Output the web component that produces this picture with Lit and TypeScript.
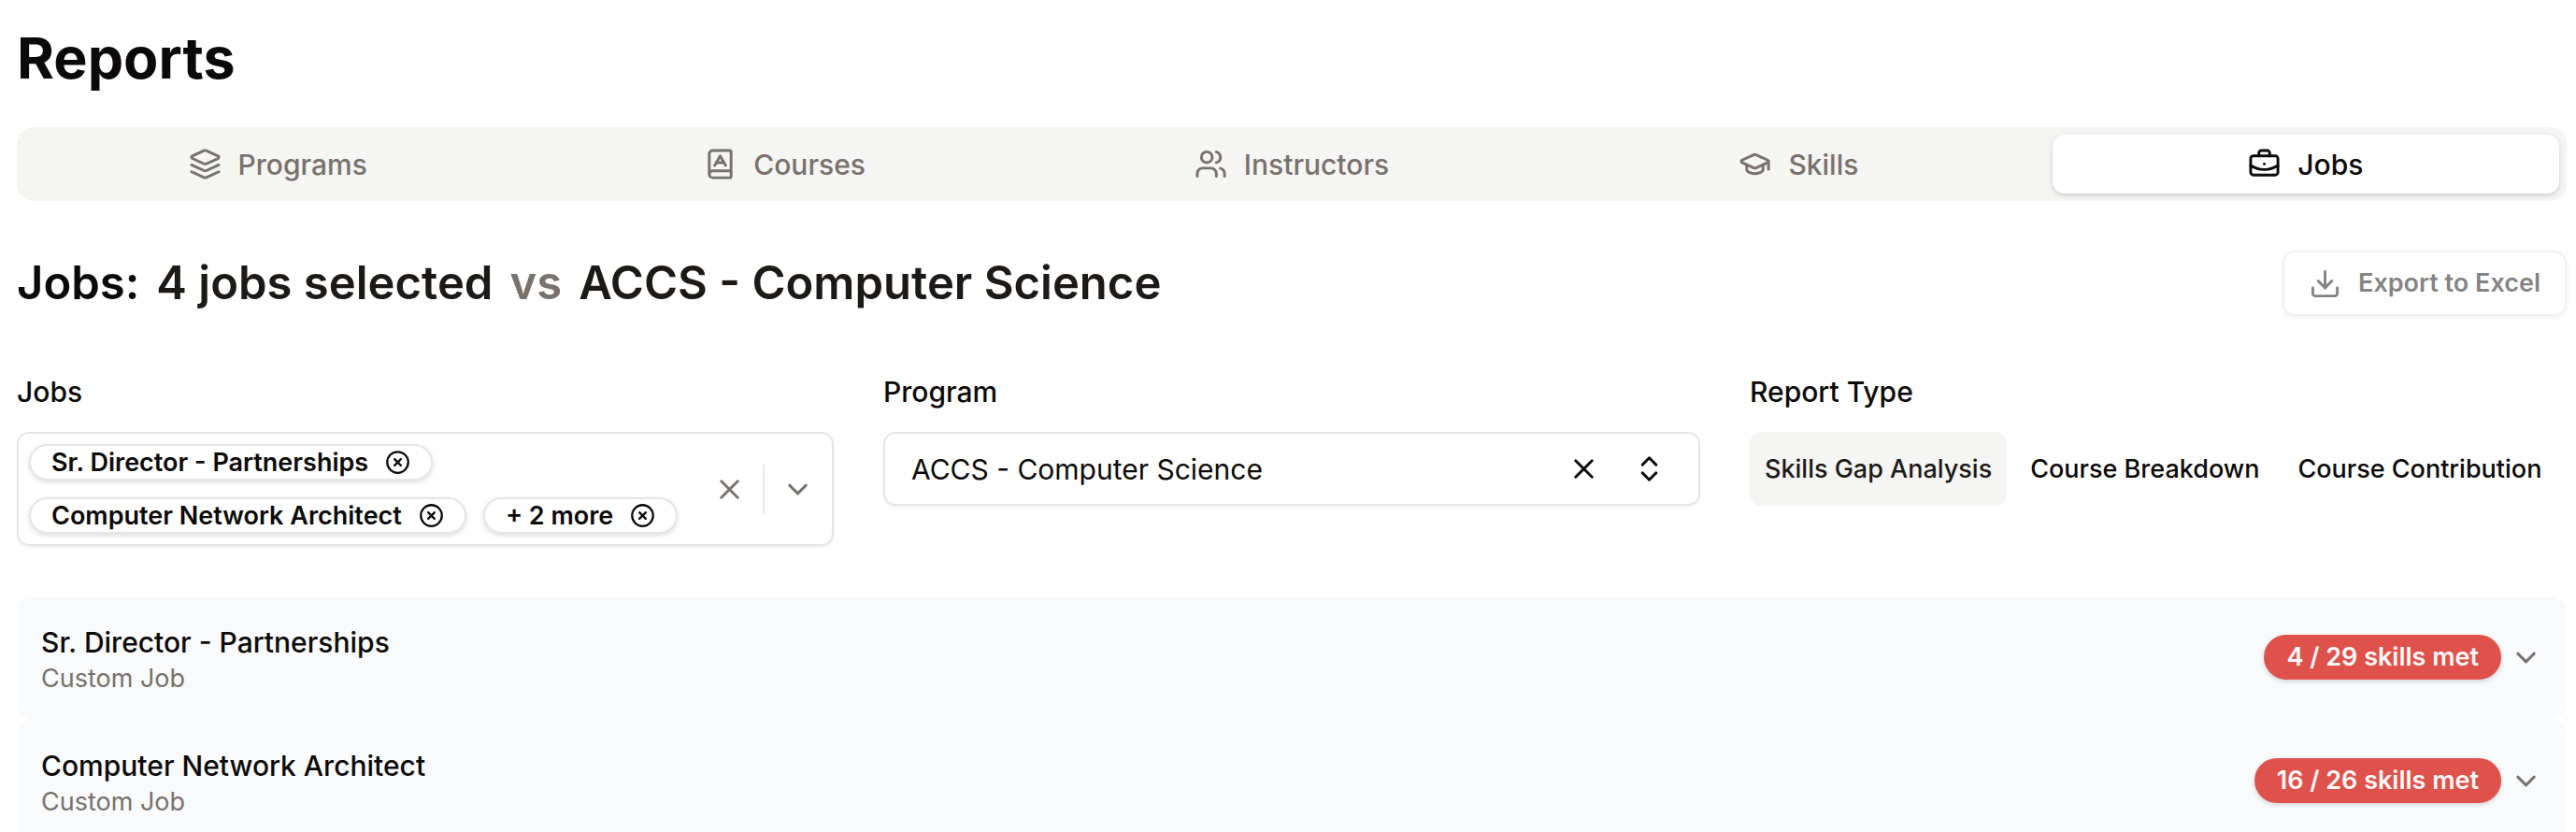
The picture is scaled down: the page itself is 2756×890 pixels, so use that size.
import { LitElement, html, css, svg } from "lit";
import { customElement, state } from "lit/decorators.js";

const icon = (body: unknown) => html`<svg class="icon" viewBox="0 0 24 24" fill="none" stroke="currentColor" stroke-width="2" stroke-linecap="round" stroke-linejoin="round" aria-hidden="true">${body}</svg>`;

const icons = {
  layers: svg`<path d="m12.83 2.18a2 2 0 0 0-1.66 0L2.6 6.08a1 1 0 0 0 0 1.83l8.58 3.91a2 2 0 0 0 1.66 0l8.58-3.9a1 1 0 0 0 0-1.83Z"/><path d="m22 12.65-9.17 4.16a2 2 0 0 1-1.66 0L2 12.65"/><path d="m22 17.65-9.17 4.16a2 2 0 0 1-1.66 0L2 17.65"/>`,
  book: svg`<path d="M4 19.5v-15A2.5 2.5 0 0 1 6.5 2H19a1 1 0 0 1 1 1v18a1 1 0 0 1-1 1H6.5a1 1 0 0 1 0-5H20"/><path d="m8 13 4-7 4 7"/><path d="M9.1 11h5.7"/>`,
  users: svg`<path d="M16 21v-2a4 4 0 0 0-4-4H6a4 4 0 0 0-4 4v2"/><circle cx="9" cy="7" r="4"/><path d="M22 21v-2a4 4 0 0 0-3-3.87"/><path d="M16 3.13a4 4 0 0 1 0 7.75"/>`,
  cap: svg`<path d="M21.42 10.922a1 1 0 0 0-.019-1.838L12.83 5.18a2 2 0 0 0-1.66 0L2.6 9.08a1 1 0 0 0 0 1.832l8.57 3.908a2 2 0 0 0 1.66 0z"/><path d="M22 10v6"/><path d="M6 12.5V16a6 3 0 0 0 12 0v-3.5"/>`,
  briefcase: svg`<path d="M12 12h.01"/><path d="M16 6V4a2 2 0 0 0-2-2h-4a2 2 0 0 0-2 2v2"/><path d="M22 13a18.15 18.15 0 0 1-20 0"/><rect width="20" height="14" x="2" y="6" rx="2"/>`,
  download: svg`<path d="M21 15v4a2 2 0 0 1-2 2H5a2 2 0 0 1-2-2v-4"/><path d="m7 10 5 5 5-5"/><path d="M12 15V3"/>`,
  close: svg`<path d="M18 6 6 18"/><path d="m6 6 12 12"/>`,
  circleX: svg`<circle cx="12" cy="12" r="10"/><path d="m15 9-6 6"/><path d="m9 9 6 6"/>`,
  down: svg`<path d="m6 9 6 6 6-6"/>`,
  upDown: svg`<path d="m7 15 5 5 5-5"/><path d="m7 9 5-5 5 5"/>`,
};

const tabs = [
  { label: "Programs", glyph: icons.layers },
  { label: "Courses", glyph: icons.book },
  { label: "Instructors", glyph: icons.users },
  { label: "Skills", glyph: icons.cap },
  { label: "Jobs", glyph: icons.briefcase },
];
const chips = ["Sr. Director - Partnerships", "Computer Network Architect", "+ 2 more"];
const reportTypes = ["Skills Gap Analysis", "Course Breakdown", "Course Contribution"];
const jobs = [
  { title: "Sr. Director - Partnerships", kind: "Custom Job", met: 4, total: 29 },
  { title: "Computer Network Architect", kind: "Custom Job", met: 16, total: 26 },
];

@customElement("app-root")
export class AppRoot extends LitElement {
  @state() private tab = "Jobs";
  @state() private report = "Skills Gap Analysis";

  static styles = css`
    :host {
      display: block;
      height: 100vh;
      overflow: hidden;
      background: #fff;
      color: #0c0a09;
      font-family: Inter, "Liberation Sans", sans-serif;
      font-size: 30px;
      line-height: 44px;
    }
    * { box-sizing: border-box; }
    button { font: inherit; color: inherit; background: none; border: 0; padding: 0; margin: 0; cursor: pointer; }
    h1, h2, p { margin: 0; }
    .icon { width: 35px; height: 35px; flex: none; display: block; }
    .page { padding: 22px 10px 0 18px; }
    h1 { font-size: 61px; line-height: 80px; font-weight: 700; }
    .tabs { display: grid; grid-template-columns: repeat(5, 1fr); margin-top: 34px; padding: 8px; background: #f5f5f4; border-radius: 18px; color: #78716c; }
    .tab { display: flex; align-items: center; justify-content: center; gap: 18px; height: 63px; border-radius: 13px; font-weight: 500; }
    .tab.on { background: #fff; color: #0c0a09; box-shadow: 0 2px 6px rgba(0, 0, 0, 0.1), 0 2px 4px rgba(0, 0, 0, 0.08); }
    .head { display: flex; align-items: center; justify-content: space-between; margin-top: 53px; }
    h2 { display: flex; gap: 18px; font-size: 49px; line-height: 70px; font-weight: 600; }
    .picked { color: #1c1917; }
    .vs { color: #78716c; }
    .export { display: flex; align-items: center; gap: 18px; height: 70px; padding: 0 26px; border: 2px solid #e7e5e4; border-radius: 13px; font-size: 27px; font-weight: 600; opacity: 0.5; box-shadow: 0 2px 4px rgba(0, 0, 0, 0.08); }
    .filters { display: grid; grid-template-columns: repeat(3, 1fr); gap: 53px; align-items: start; margin-top: 59px; }
    .label { display: block; margin-bottom: 21px; font-weight: 500; }
    .box { display: flex; align-items: center; border: 2px solid #e7e5e4; border-radius: 13px; box-shadow: 0 2px 3px rgba(0, 0, 0, 0.05); }
    .multi { padding: 11px; }
    .chips { display: flex; flex-wrap: wrap; gap: 18px; flex: 1; }
    .chip { display: flex; align-items: center; gap: 18px; height: 39px; padding: 0 22px; border: 2px solid #e7e5e4; border-radius: 20px; font-size: 27px; line-height: 35px; font-weight: 600; box-shadow: 0 2px 5px rgba(0, 0, 0, 0.14); }
    .chip .icon { width: 27px; height: 27px; }
    .tools { display: flex; align-items: center; gap: 18px; padding: 0 8px; color: #78716c; }
    .rule { width: 2px; height: 53px; background: #e7e5e4; }
    .single { height: 79px; padding: 0 35px 0 28px; gap: 35px; }
    .value { flex: 1; text-align: left; }
    .types { display: flex; gap: 9px; }
    .type { height: 79px; padding: 0 16px; border-radius: 13px; font-size: 27px; font-weight: 500; white-space: nowrap; }
    .type.on { background: #f5f5f4; color: #1c1917; }
    .jobs { margin-top: 53px; }
    .job { display: flex; width: 100%; align-items: center; justify-content: space-between; height: 132px; padding: 0 26px; text-align: left; background: #f9fafc; border-radius: 18px; }
    .title { font-weight: 500; }
    .kind { font-size: 27px; line-height: 33px; color: #78716c; }
    .state { display: flex; align-items: center; gap: 9px; color: #78716c; }
    .badge { height: 48px; padding: 0 24px; border-radius: 24px; background: #df514b; color: #fafaf9; font-size: 27px; line-height: 48px; font-weight: 600; box-shadow: 0 2px 5px rgba(0, 0, 0, 0.16); }
  `;

  render() {
    return html`<main class="page">
      <h1>Reports</h1>
      <div class="tabs" role="tablist">
        ${tabs.map((t) => html`<button class="tab ${t.label === this.tab ? "on" : ""}" role="tab" aria-selected=${t.label === this.tab} @click=${() => (this.tab = t.label)}>${icon(t.glyph)}${t.label}</button>`)}
      </div>
      <div class="head">
        <h2><span>Jobs:</span><span class="picked">4 jobs selected</span><span class="vs">vs</span><span class="picked">ACCS - Computer Science</span></h2>
        <button class="export" disabled>${icon(icons.download)}Export to Excel</button>
      </div>
      <div class="filters">
        <div>
          <span class="label" id="jobs-label">Jobs</span>
          <div class="box multi" role="group" aria-labelledby="jobs-label">
            <div class="chips">
              ${chips.map((c) => html`<span class="chip">${c}<button aria-label="Remove ${c}">${icon(icons.circleX)}</button></span>`)}
            </div>
            <div class="tools">
              <button aria-label="Clear jobs">${icon(icons.close)}</button>
              <span class="rule"></span>
              <button aria-label="Open jobs">${icon(icons.down)}</button>
            </div>
          </div>
        </div>
        <div>
          <label class="label" for="program">Program</label>
          <div class="box single">
            <button class="value" id="program" role="combobox" aria-expanded="false">ACCS - Computer Science</button>
            <button aria-label="Clear program">${icon(icons.close)}</button>
            <button aria-label="Open programs">${icon(icons.upDown)}</button>
          </div>
        </div>
        <div>
          <span class="label" id="type-label">Report Type</span>
          <div class="types" role="group" aria-labelledby="type-label">
            ${reportTypes.map((r) => html`<button class="type ${r === this.report ? "on" : ""}" aria-pressed=${r === this.report} @click=${() => (this.report = r)}>${r}</button>`)}
          </div>
        </div>
      </div>
      <section class="jobs">
        ${jobs.map((j) => html`<button class="job" aria-expanded="false">
          <div><p class="title">${j.title}</p><p class="kind">${j.kind}</p></div>
          <div class="state"><span class="badge">${j.met} / ${j.total} skills met</span>${icon(icons.down)}</div>
        </button>`)}
      </section>
    </main>`;
  }
}
